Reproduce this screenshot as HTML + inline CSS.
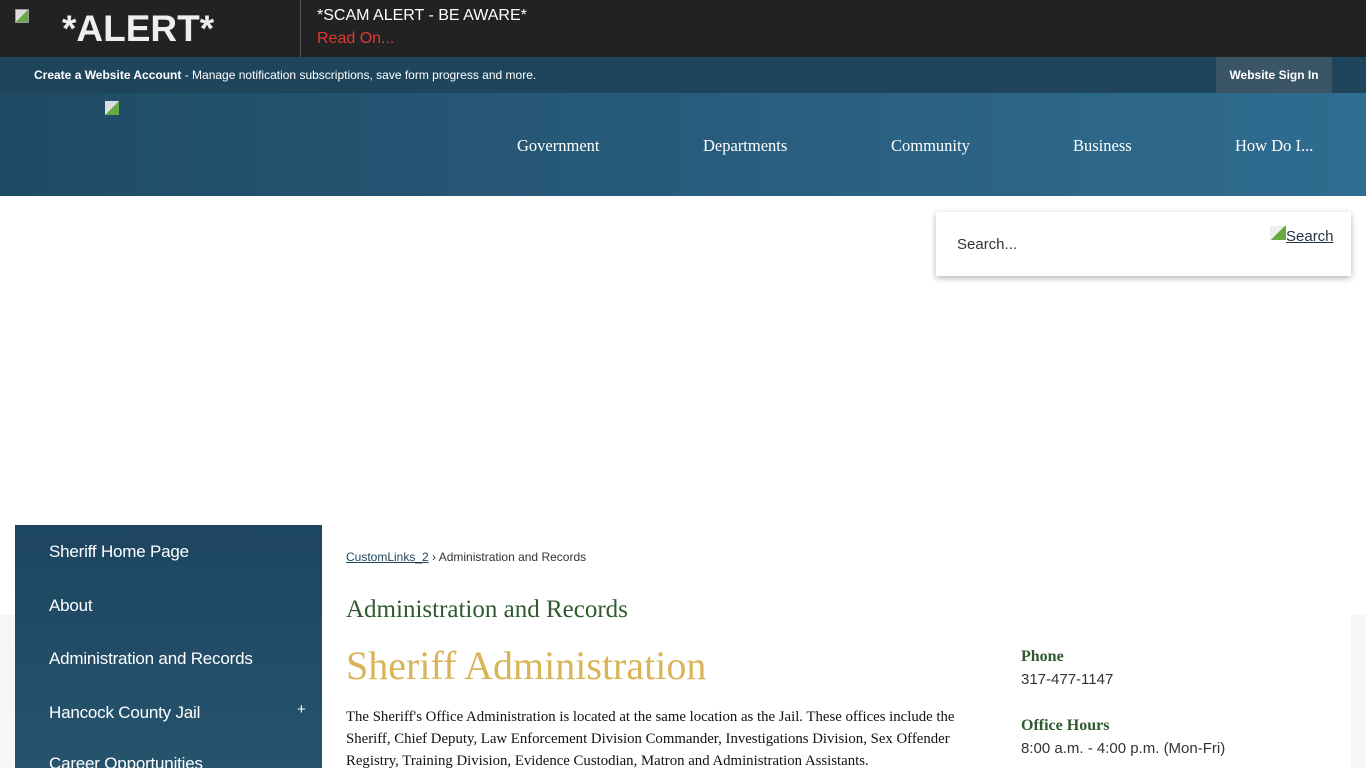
<!DOCTYPE html>
<html><head><meta charset="utf-8"><style>
*{margin:0;padding:0;box-sizing:border-box}
body{width:1366px;height:768px;overflow:hidden;background:#fff;font-family:"Liberation Sans",sans-serif;position:relative}
.alert{position:absolute;top:0;left:0;width:1366px;height:57px;background:#222}
.alert .t{position:absolute;left:62px;top:8px;color:#eee;font-weight:bold;font-size:37px}
.alert .ic{position:absolute;left:15px;top:9px;width:14px;height:14px;border:1px solid #999;background:linear-gradient(135deg,#ddd 50%,#6a4 50%)}
.alert .sep{position:absolute;left:300px;top:0;width:1px;height:57px;background:#555}
.alert .s{position:absolute;left:317px;top:7px;color:#fff;font-size:16px}
.alert .r{position:absolute;left:317px;top:30px;color:#e03a2e;font-size:16px}
.acct{position:absolute;top:57px;left:0;width:1366px;height:36px;background:#1f455d}
.acct .a{position:absolute;left:34px;top:11px;color:#fff;font-size:12px}
.acct .b{position:absolute;left:1216px;top:0;width:116px;height:36px;background:#3a5565;color:#fff;font-size:12px;font-weight:bold;text-align:center;line-height:36px}
.hdr{position:absolute;top:93px;left:0;width:1366px;height:103px;background:linear-gradient(90deg,#1f4a64,#2a5f80 60%,#2f6d90)}
.hdr .logo{position:absolute;left:105px;top:8px;width:14px;height:14px;background:linear-gradient(135deg,#ddd 50%,#6a4 50%)}
.nav{position:absolute;top:43px;color:#fff;font-family:"Liberation Serif",serif;font-size:16.5px}
.search{position:absolute;left:936px;top:212px;width:415px;height:64px;background:#fff;box-shadow:0 2px 6px rgba(0,0,0,.3)}
.search .p{position:absolute;left:21px;top:24px;font-size:15px;color:#333}
.search .i{position:absolute;left:334px;top:14px;width:16px;height:14px;background:linear-gradient(135deg,#eee 50%,#6a4 50%)}
.search .g{position:absolute;left:350px;top:16px;font-size:15px;color:#234;text-decoration:underline}
.graybar{position:absolute;top:615px;left:0;width:1366px;height:153px;background:#f6f6f6}
.card{position:absolute;left:15px;top:525px;width:1336px;height:243px;background:#fff}
.side{position:absolute;left:15px;top:525px;width:307px;height:243px;background:linear-gradient(#1d4560,#27536d)}
.side div{position:absolute;left:34px;color:#fff;font-size:17px;letter-spacing:-0.2px}
.bc{position:absolute;left:346px;top:550px;font-size:12px;color:#333}
.bc u{color:#1f455d}
h2{position:absolute;left:346px;top:596px;font-family:"Liberation Serif",serif;font-weight:normal;font-size:25px;color:#2e5a2e}
h1{position:absolute;left:346px;top:642px;font-family:"Liberation Serif",serif;font-weight:normal;font-size:40px;color:#d9b458}
.body{position:absolute;left:346px;top:706px;width:625px;font-family:"Liberation Serif",serif;font-size:14.8px;line-height:22px;color:#111}
.ct{position:absolute;left:1021px;font-family:"Liberation Serif",serif;font-weight:bold;font-size:16px;color:#2e5a2e}
.cv{position:absolute;left:1021px;font-size:15px;color:#333}
</style></head><body>
<div class="alert"><div class="ic"></div><div class="t">*ALERT*</div><div class="sep"></div><div class="s">*SCAM ALERT - BE AWARE*</div><div class="r">Read On...</div></div>
<div class="acct"><div class="a"><b>Create a Website Account</b> - Manage notification subscriptions, save form progress and more.</div><div class="b">Website Sign In</div></div>
<div class="hdr"><div class="logo"></div>
<div class="nav" style="left:517px">Government</div>
<div class="nav" style="left:703px">Departments</div>
<div class="nav" style="left:891px">Community</div>
<div class="nav" style="left:1073px">Business</div>
<div class="nav" style="left:1235px">How Do I...</div></div>
<div class="search"><div class="p">Search...</div><div class="i"></div><div class="g">Search</div></div>
<div class="graybar"></div>
<div class="card"></div>
<div class="side">
<div style="top:17px">Sheriff Home Page</div>
<div style="top:71px">About</div>
<div style="top:124px">Administration and Records</div>
<div style="top:178px">Hancock County Jail</div>
<div style="top:176px;left:282px;font-size:15px">+</div>
<div style="top:229px">Career Opportunities</div>
</div>
<div class="bc"><u>CustomLinks_2</u> › Administration and Records</div>
<h2>Administration and Records</h2>
<h1>Sheriff Administration</h1>
<div class="body">The Sheriff's Office Administration is located at the same location as the Jail. These offices include the Sheriff, Chief Deputy, Law Enforcement Division Commander, Investigations Division, Sex Offender Registry, Training Division, Evidence Custodian, Matron and Administration Assistants.</div>
<div class="ct" style="top:648px">Phone</div>
<div class="cv" style="top:671px">317-477-1147</div>
<div class="ct" style="top:717px">Office Hours</div>
<div class="cv" style="top:740px">8:00 a.m. - 4:00 p.m. (Mon-Fri)</div>
</body></html>
